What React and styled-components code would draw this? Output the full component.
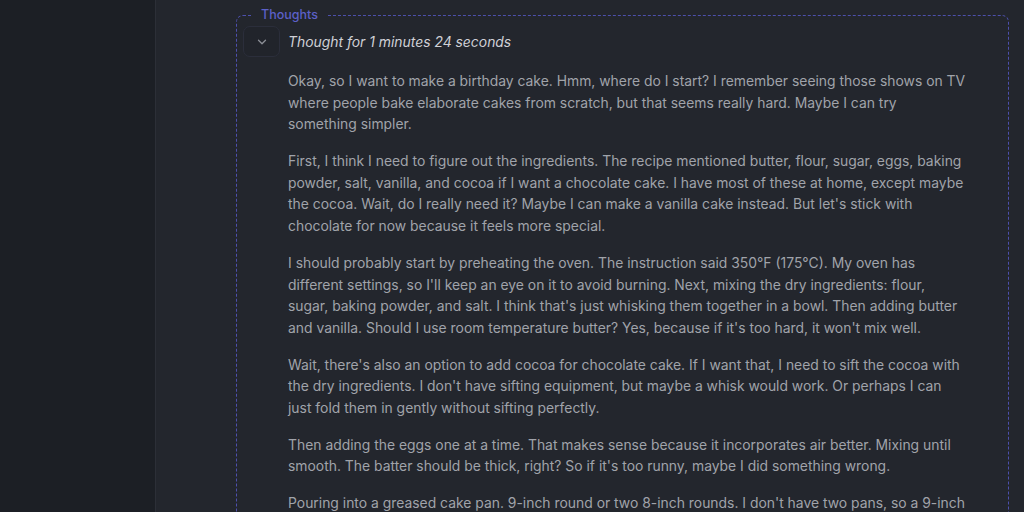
import React from "react";
import styled, { createGlobalStyle } from "styled-components";

const Global = createGlobalStyle`
  html, body { margin: 0; padding: 0; height: 100%; overflow: hidden; background: #23262d; }
  body { font-family: Inter, "Noto Sans", sans-serif; -webkit-font-smoothing: antialiased; }
  #root { height: 100%; }
`;

const Page = styled.div`
  display: flex;
  height: 100%;
`;

const Sidebar = styled.aside`
  width: 155px;
  flex-shrink: 0;
  background: #1c1f25;
  border-right: 1px solid #2c2f37;
`;

const Main = styled.main`
  flex: 1;
  min-width: 0;
  background: #23262d;
  padding: 7px 15px 0 80px;
`;

const Thoughts = styled.fieldset`
  margin: 0;
  min-width: 0;
  border: 1px dashed #4d50ad;
  border-radius: 7px;
  padding: 3px 6px 20px 6px;
`;

const Legend = styled.legend`
  margin-left: 10px;
  padding: 0 8px;
  font-size: 12.5px;
  line-height: 16px;
  font-weight: 500;
  color: #5c60c8;
`;

const Header = styled.div`
  display: flex;
  align-items: center;
  gap: 8px;
`;

const ToggleButton = styled.button`
  width: 37px;
  height: 31px;
  display: flex;
  align-items: center;
  justify-content: center;
  padding: 0;
  background: #21242b;
  border: 1px solid #2b2e3b;
  border-radius: 7px;
  color: #8b8e96;
  cursor: pointer;
`;

const Title = styled.span`
  font-size: 13.9px;
  font-style: italic;
  color: #cfd0d6;
`;

const Body = styled.div`
  padding: 14px 0 0 45px;
  max-width: 679.5px;
`;

const Para = styled.p`
  margin: 0 0 15.4px;
  font-size: 13.9px;
  line-height: 21.6px;
  color: #a0a3aa;
`;

const paragraphs = [
  "Okay, so I want to make a birthday cake. Hmm, where do I start? I remember seeing those shows on TV where people bake elaborate cakes from scratch, but that seems really hard. Maybe I can try something simpler.",
  "First, I think I need to figure out the ingredients. The recipe mentioned butter, flour, sugar, eggs, baking powder, salt, vanilla, and cocoa if I want a chocolate cake. I have most of these at home, except maybe the cocoa. Wait, do I really need it? Maybe I can make a vanilla cake instead. But let's stick with chocolate for now because it feels more special.",
  "I should probably start by preheating the oven. The instruction said 350°F (175°C). My oven has different settings, so I'll keep an eye on it to avoid burning. Next, mixing the dry ingredients: flour, sugar, baking powder, and salt. I think that's just whisking them together in a bowl. Then adding butter and vanilla. Should I use room temperature butter? Yes, because if it's too hard, it won't mix well.",
  "Wait, there's also an option to add cocoa for chocolate cake. If I want that, I need to sift the cocoa with the dry ingredients. I don't have sifting equipment, but maybe a whisk would work. Or perhaps I can just fold them in gently without sifting perfectly.",
  "Then adding the eggs one at a time. That makes sense because it incorporates air better. Mixing until smooth. The batter should be thick, right? So if it's too runny, maybe I did something wrong.",
  "Pouring into a greased cake pan. 9-inch round or two 8-inch rounds. I don't have two pans, so a 9-inch round it is. The baking time says 30 to 35 minutes, or until a toothpick comes out clean.",
];

const Chevron = () => (
  <svg width="14" height="14" viewBox="0 0 24 24" fill="none" stroke="currentColor" strokeWidth="2.2" strokeLinecap="round" strokeLinejoin="round">
    <path d="M6 9l6 6 6-6" />
  </svg>
);

export default function App() {
  return (
    <>
      <Global />
      <Page>
        <Sidebar />
        <Main>
          <Thoughts>
            <Legend>Thoughts</Legend>
            <Header>
              <ToggleButton aria-label="Collapse thoughts">
                <Chevron />
              </ToggleButton>
              <Title>Thought for 1 minutes 24 seconds</Title>
            </Header>
            <Body>
              {paragraphs.map((p, i) => (
                <Para key={i}>{p}</Para>
              ))}
            </Body>
          </Thoughts>
        </Main>
      </Page>
    </>
  );
}
